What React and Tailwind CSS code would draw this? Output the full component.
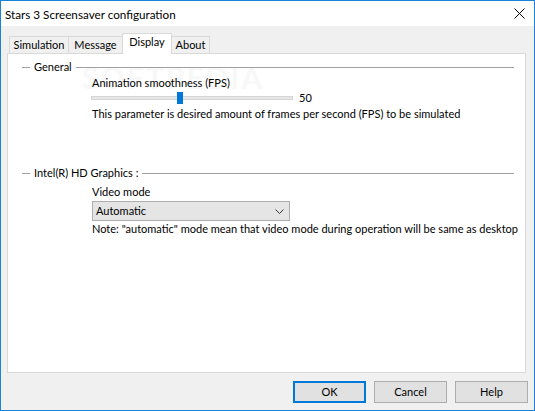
import React from "react";

const font = { fontFamily: 'Lato, "Noto Sans", Arial, sans-serif' };

function GroupHeader({ label, className = "" }) {
  return (
    <div className={`flex items-center h-[16px] pl-[14px] pr-[11px] ${className}`}>
      <div className="w-[8px] h-px bg-[#a0a0a0]" />
      <span className="px-[4px] leading-[16px] whitespace-nowrap">{label}</span>
      <div className="flex-1 h-px bg-[#a0a0a0]" />
    </div>
  );
}

function Button({ children, primary }) {
  return (
    <div
      className={`w-[73px] h-[22px] flex items-center justify-center bg-[#e1e1e1] ${
        primary ? "border-2 border-[#0078d7]" : "border border-[#adadad]"
      }`}
    >
      {children}
    </div>
  );
}

export default function App() {
  return (
    <div
      className="w-[535px] h-[411px] border border-[#1883d7] bg-[#f0f0f0] flex flex-col text-[11px] text-black overflow-hidden whitespace-nowrap"
      style={font}
    >
      {/* Title bar */}
      <div className="h-[25px] bg-white flex items-center justify-between pl-[4px] pr-[9px] shrink-0">
        <span className="leading-[16px] text-[11.7px]">Stars 3 Screensaver configuration</span>
        <svg width="11" height="11" viewBox="0 0 11 11">
          <path d="M0.5 0.5 L10.5 10.5 M10.5 0.5 L0.5 10.5" stroke="#000" strokeWidth="1" fill="none" />
        </svg>
      </div>

      {/* Tabs */}
      <div className="mt-[7px] ml-[6px] w-[519px] flex flex-col">
        <div className="h-[20px] flex items-end pl-[2px] relative z-10">
          <div className="w-[60px] h-[17px] border border-b-0 border-[#d9d9d9] bg-[#f0f0f0] flex justify-center leading-[16px]">
            Simulation
          </div>
          <div className="w-[55px] h-[17px] -ml-px border border-b-0 border-[#d9d9d9] bg-[#f0f0f0] flex justify-center leading-[16px]">
            Message
          </div>
          <div className="w-[50px] h-[21px] -ml-px -mb-px border border-b-0 border-[#d9d9d9] bg-white flex justify-center pt-[0px] leading-[16px]">
            Display
          </div>
          <div className="w-[39px] h-[17px] -ml-px border border-b-0 border-[#d9d9d9] bg-[#f0f0f0] flex justify-center leading-[16px]">
            About
          </div>
        </div>

        {/* Panel */}
        <div className="h-[320px] bg-white border border-[#d9d9d9] relative">
          <div className="absolute left-[74px] top-[8px] text-[30px] font-bold tracking-[2px] text-[#f8f8f8] leading-none select-none">
            SOFTPEDIA
          </div>
          <div className="relative flex flex-col">
            <GroupHeader label="General" className="mt-[5px]" />
            <div className="pl-[84px] flex flex-col">
              <div className="leading-[16px]">Animation smoothness (FPS)</div>
              <div className="mt-[1px] h-[12px] flex items-center -ml-px">
                <div className="w-[202px] h-[4px] bg-[#e7e7e7] border border-[#d6d6d6] relative">
                  <div className="absolute left-[85px] top-[-5px] w-[6px] h-[12px] bg-[#0078d7]" />
                </div>
                <span className="ml-[6px] leading-[16px]">50</span>
              </div>
              <div className="mt-[2px] leading-[16px]">
                This parameter is desired amount of frames per second (FPS) to be simulated
              </div>
            </div>

            <GroupHeader label="Intel(R) HD Graphics :" className="mt-[43px]" />
            <div className="pl-[84px] flex flex-col">
              <div className="mt-[3px] leading-[16px]">Video mode</div>
              <div className="mt-[1px] w-[198px] h-[20px] bg-[#e5e5e5] border border-[#adadad] flex items-center justify-between pl-[3px] pr-[5px]">
                <span className="leading-[16px]">Automatic</span>
                <svg width="9" height="5" viewBox="0 0 9 5">
                  <path d="M0.5 0.5 L4.5 4.5 L8.5 0.5" stroke="#333" strokeWidth="1" fill="none" />
                </svg>
              </div>
              <div className="leading-[16px]">
                Note: "automatic" mode mean that video mode during operation will be same as desktop
              </div>
            </div>
          </div>
        </div>
      </div>

      {/* Buttons */}
      <div className="mt-[8px] flex justify-end gap-[8px] pr-[6px]">
        <Button primary>OK</Button>
        <Button>Cancel</Button>
        <Button>Help</Button>
      </div>
    </div>
  );
}
